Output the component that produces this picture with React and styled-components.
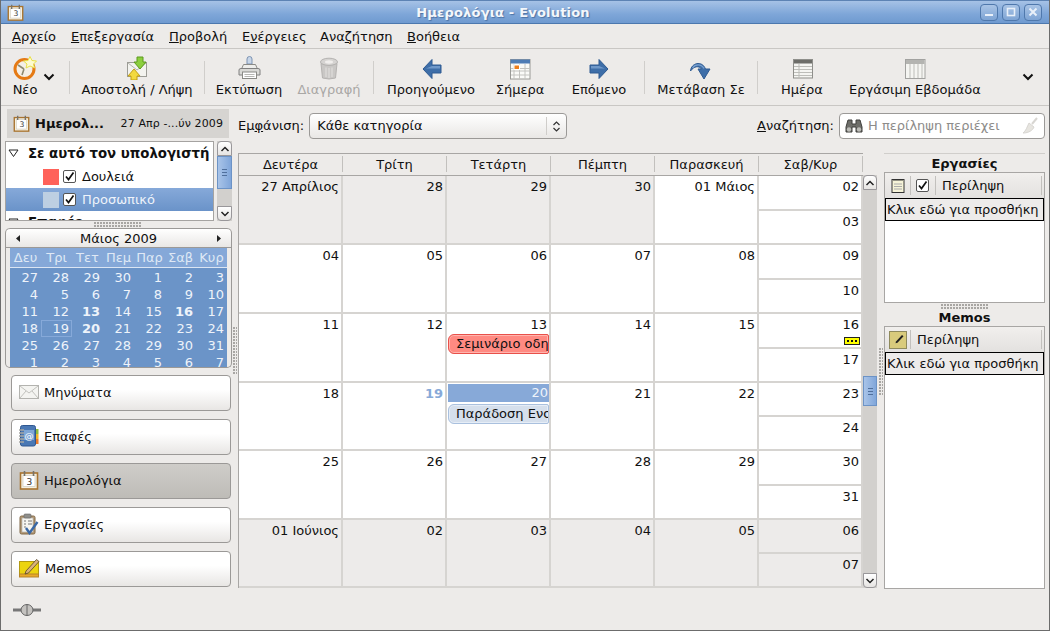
import React from "react";
import styled, { createGlobalStyle } from "styled-components";

const Global = createGlobalStyle`
  html, body { margin: 0; padding: 0; background: #edebe9; }
  body { font-family: "DejaVu Sans", sans-serif; font-size: 13px; color: #101010; }
  * { box-sizing: border-box; }
`;

const Window = styled.div`
  width: 1050px;
  height: 631px;
  display: flex;
  flex-direction: column;
  background: #edebe9;
  border-left: 1px solid #6c6c6c;
  border-right: 1px solid #6c6c6c;
  border-bottom: 1px solid #6c6c6c;
  overflow: hidden;
`;

const TitleBar = styled.div`
  height: 24px;
  flex: none;
  display: flex;
  align-items: center;
  padding: 0 7px 0 6px;
  background: linear-gradient(#a6c2e6, #7ea6d8 60%, #6f9ad0);
  border-top: 1px solid #5d83b4;
  border-bottom: 1px solid #4c78ae;
`;

const TitleText = styled.div`
  flex: 1;
  text-align: center;
  font-weight: bold;
  font-size: 13px;
  letter-spacing: 0.2px;
  color: #f4f7fb;
  text-shadow: 1px 1px 1px #4d73a5;
  padding-left: 2px;
`;

const WinButtons = styled.div`
  display: flex;
  gap: 4px;
`;

const WinButton = styled.div`
  width: 18px;
  height: 17px;
  border: 1px solid #4f78ac;
  border-radius: 4px;
  background: linear-gradient(#a9c4e6, #7ea4d4);
  display: flex;
  align-items: center;
  justify-content: center;
`;

const MenuBar = styled.div`
  height: 25px;
  flex: none;
  display: flex;
  align-items: center;
  padding-left: 11px;
  border-bottom: 1px solid #c9c7c4;
`;

const MenuItem = styled.span`
  width: ${(p) => p.$w}px;
  white-space: nowrap;
`;

const Mn = styled.span`
  text-decoration: underline;
`;

const ToolBar = styled.div`
  height: 57px;
  flex: none;
  display: flex;
  align-items: stretch;
  border-bottom: 1px solid #c9c7c4;
`;

const ToolButton = styled.div`
  width: ${(p) => p.$w}px;
  margin-left: ${(p) => p.$before || 0}px;
  margin-right: ${(p) => p.$after || 0}px;
  flex: none;
  display: flex;
  flex-direction: column;
  align-items: center;
  padding-top: 7px;
  white-space: nowrap;
  color: ${(p) => (p.$off ? "#a9a7a5" : "#101010")};
`;

const ToolIcon = styled.div`
  width: 24px;
  height: 24px;
  margin-bottom: 2px;
`;

const ToolSep = styled.div`
  width: 1px;
  flex: none;
  margin: 12px 0 11px;
  background: #d0cecb;
`;

const ToolArrow = styled.div`
  width: ${(p) => p.$w}px;
  flex: none;
  display: flex;
  justify-content: ${(p) => (p.$left ? "flex-start" : "center")};
  padding-top: 23px;
`;

const Content = styled.div`
  flex: 1;
  display: flex;
  min-height: 0;
`;

const Sidebar = styled.div`
  width: 232px;
  flex: none;
  padding: 3px 0 0 4px;
`;

const SideHeader = styled.div`
  width: 222px;
  height: 29px;
  margin-left: 2px;
  background: #d6d4d1;
  display: flex;
  align-items: center;
  padding: 0 6px;
`;

const SideTitle = styled.div`
  flex: 1;
  margin-left: 5px;
  font-weight: bold;
  font-size: 13px;
`;

const SideDate = styled.div`
  font-size: 11px;
  letter-spacing: 0.1px;
`;

const TreeRow = styled.div`
  display: flex;
  margin-top: 3px;
  gap: 3px;
`;

const Tree = styled.div`
  width: 209px;
  height: 80px;
  background: #fff;
  border: 1px solid #a5a3a1;
  overflow: hidden;
`;

const TreeItem = styled.div`
  height: 23px;
  display: flex;
  align-items: center;
  padding-left: ${(p) => p.$indent}px;
  font-weight: ${(p) => (p.$group ? "bold" : "normal")};
  font-size: ${(p) => (p.$group ? "13.3px" : "13px")};
  color: ${(p) => (p.$sel ? "#eef3fa" : "#101010")};
  background: ${(p) => (p.$sel ? "linear-gradient(#86a9d9, #6a93c9)" : "transparent")};
  white-space: nowrap;
`;

const Expander = styled.svg`
  width: 11px;
  height: 9px;
  margin-right: 9px;
  flex: none;
`;

const Swatch = styled.div`
  width: 16px;
  height: 16px;
  background: ${(p) => p.$c};
  margin-right: 4px;
`;

const Check = styled.div`
  width: 13px;
  height: 13px;
  border: 1px solid #555;
  border-radius: 2px;
  background: #fff;
  margin-right: ${(p) => p.$mr || 6}px;
  display: flex;
  align-items: center;
  justify-content: center;
`;

const ScrollBar = styled.div`
  width: ${(p) => p.$w}px;
  height: ${(p) => p.$h}px;
  flex: none;
  display: flex;
  flex-direction: column;
  background: #d2d0cd;
`;

const ScrollBtn = styled.div`
  height: ${(p) => p.$h}px;
  flex: none;
  background: linear-gradient(#fff, #e6e4e2);
  border: 1px solid #99979a;
  border-radius: ${(p) => (p.$down ? "0 0 4px 4px" : "4px 4px 0 0")};
  display: flex;
  align-items: center;
  justify-content: center;
`;

const ScrollTrack = styled.div`
  flex: 1;
  padding-top: ${(p) => p.$top}px;
`;

const ScrollThumb = styled.div`
  height: ${(p) => p.$h}px;
  background: linear-gradient(90deg, #a9c4e8, #80a6da);
  border: 1px solid #6c93c6;
  display: flex;
  flex-direction: column;
  justify-content: center;
  align-items: center;
  gap: 2px;
`;

const Grip = styled.div`
  width: 5px;
  height: 1px;
  background: #4f6f9c;
`;

const Dots = styled.div`
  width: ${(p) => p.$w}px;
  height: ${(p) => p.$h}px;
  flex: none;
  background-image: radial-gradient(circle at 1px 1px, #a8a6a3 0.8px, transparent 1px);
  background-size: 3px 3px;
`;

const HandleH = styled.div`
  height: 7px;
  display: flex;
  justify-content: center;
  align-items: center;
  padding-right: 2px;
`;

const MiniCal = styled.div`
  width: 227px;
  height: 140px;
  border: 1px solid #9b9997;
  border-top: none;
  border-radius: 5px;
  display: flex;
  flex-direction: column;
  align-items: center;
  overflow: hidden;
`;

const MiniHead = styled.div`
  width: 227px;
  height: 20px;
  flex: none;
  border: 1px solid #9b9997;
  border-radius: 5px 5px 0 0;
  background: linear-gradient(#fff, #e9e7e5);
  display: flex;
  align-items: center;
  justify-content: space-between;
  padding: 0 10px;
`;

const MiniBody = styled.div`
  width: 217px;
  flex: 1;
  background: #6b94c8;
`;

const MiniDays = styled.div`
  display: grid;
  grid-template-columns: repeat(7, 31px);
  height: 20px;
  background: #85a8d8;
  align-items: center;
  text-align: center;
  font-size: 13px;
  color: #dfe8f5;
  border-bottom: 1px solid #dbe5f3;
  white-space: nowrap;
`;

const MiniGrid = styled.div`
  display: grid;
  grid-template-columns: repeat(7, 31px);
  grid-auto-rows: 17px;
  margin-top: 1px;
`;

const MiniCell = styled.div`
  text-align: right;
  padding-right: 2px;
  line-height: 16px;
  color: #eef3fa;
  font-weight: ${(p) => (p.$bold ? "bold" : "normal")};
  border: 1px solid ${(p) => (p.$today ? "#86a9d9" : "transparent")};
`;

const SwitchList = styled.div`
  margin: 7px 0 0 6px;
  display: flex;
  flex-direction: column;
  gap: 8px;
`;

const SwitchBtn = styled.div`
  width: 220px;
  height: 36px;
  border: 1px solid #9b9997;
  border-radius: 4px;
  display: flex;
  align-items: center;
  padding: 0 0 2px 7px;
  gap: 5px;
  background: ${(p) =>
    p.$on ? "linear-gradient(#cfcdc9, #bebcb7)" : "linear-gradient(#fff 40%, #e8e6e4)"};
`;

const SideHandle = styled.div`
  width: 5px;
  flex: none;
  padding-top: 221px;
`;

const Main = styled.div`
  flex: 1;
  min-width: 0;
  display: flex;
  flex-direction: column;
`;

const FilterBar = styled.div`
  height: 47px;
  flex: none;
  display: flex;
  align-items: center;
  padding: 0 4px 7px 0;
`;

const FilterLabel = styled.div`
  margin-right: 5px;
  padding-bottom: 2px;
  white-space: nowrap;
`;

const Combo = styled.div`
  width: 258px;
  height: 26px;
  border: 1px solid #9b9997;
  border-radius: 4px;
  background: linear-gradient(#fff, #e9e7e5);
  display: flex;
  align-items: center;
  padding-left: 7px;
`;

const ComboText = styled.div`
  flex: 1;
  padding-bottom: 2px;
`;

const ComboArrow = styled.div`
  width: 20px;
  height: 18px;
  border-left: 1px solid #cfcdca;
  display: flex;
  align-items: center;
  justify-content: center;
`;

const Spacer = styled.div`
  flex: 1;
`;

const SearchBox = styled.div`
  width: 206px;
  height: 26px;
  border: 1px solid #9b9997;
  border-radius: 4px;
  background: #fff;
  display: flex;
  align-items: center;
  padding: 0 5px;
  color: #8d8b89;
`;

const SearchText = styled.div`
  flex: 1;
  margin-left: 5px;
  padding-bottom: 2px;
  white-space: nowrap;
`;

const Panes = styled.div`
  flex: 1;
  display: flex;
  min-height: 0;
`;

const CalWrap = styled.div`
  width: 625px;
  flex: none;
  display: flex;
  flex-direction: column;
  border: 1px solid #a8a6a4;
  border-right: none;
  border-bottom: none;
  height: 435px;
`;

const CalHead = styled.div`
  display: grid;
  grid-template-columns: repeat(6, 104px);
  height: 22px;
  flex: none;
  background: #edebe9;
  border-bottom: 1px solid #a8a6a4;
`;

const CalHeadCell = styled.div`
  display: flex;
  align-items: center;
  justify-content: center;
  border-right: 1px solid #c2c0bd;
  margin: 2px 0 3px;
`;

const CalGrid = styled.div`
  display: grid;
  grid-template-columns: repeat(6, 104px);
  grid-template-rows: 69px 69px 69px 68px 69px 68px;
`;

const DayCell = styled.div`
  background: ${(p) => (p.$dim ? "#edebea" : "#fff")};
  border-right: 2px solid #d6d4d1;
  border-bottom: 2px solid #d6d4d1;
  display: flex;
  flex-direction: column;
  overflow: hidden;
`;

const DayNum = styled.div`
  text-align: right;
  padding: 3px 2px 0 0;
  height: 19px;
  line-height: 16px;
  white-space: nowrap;
  color: ${(p) => (p.$blue ? "#87a9d8" : "#101010")};
  font-weight: ${(p) => (p.$blue ? "bold" : "normal")};
`;

const TodayNum = styled.div`
  margin: 1px 0 0 1px;
  height: 18px;
  line-height: 17px;
  text-align: right;
  padding-right: 1px;
  background: #87a9d8;
  color: #eef3fa;
`;

const Event = styled.div`
  height: 20px;
  margin: ${(p) => (p.$gap ? 2 : 1)}px 0 0 1px;
  border: 1px solid ${(p) => (p.$red ? "#e8504a" : "#a9c0de")};
  border-radius: 6px 2px 2px 6px;
  background: ${(p) => (p.$red ? "#ff8a82" : "#d5dfec")};
  box-shadow: inset 0 0 0 1px ${(p) => (p.$red ? "#ffb5ae" : "#e6edf6")};
  padding-left: 7px;
  line-height: 18px;
  white-space: nowrap;
  overflow: hidden;
`;

const SplitCell = styled.div`
  display: flex;
  flex-direction: column;
`;

const HalfDay = styled.div`
  flex: 1 1 0;
  min-height: 0;
  background: ${(p) => (p.$dim ? "#edebea" : "#fff")};
  border-right: 2px solid #d6d4d1;
  border-bottom: 2px solid #d6d4d1;
  display: flex;
  flex-direction: column;
`;

const MoreBadge = styled.div`
  align-self: flex-end;
  margin: 4px 1px 0 0;
  width: 16px;
  height: 8px;
  background: #ffff00;
  border: 1px solid #222;
  display: flex;
  align-items: center;
  justify-content: center;
  gap: 2px;
`;

const MoreDot = styled.div`
  width: 2px;
  height: 2px;
  background: #111;
`;

const CalScroll = styled.div`
  margin-top: 22px;
`;

const PaneHandle = styled.div`
  width: 7px;
  flex: none;
  padding: 195px 0 0 2px;
`;

const TaskPane = styled.div`
  width: 161px;
  flex: none;
  display: flex;
  flex-direction: column;
  border-top: 1px solid #d0cecb;
`;

const PaneTitle = styled.div`
  height: ${(p) => p.$h}px;
  flex: none;
  font-weight: bold;
  text-align: center;
  line-height: ${(p) => p.$lh}px;
`;

const ListBox = styled.div`
  height: ${(p) => p.$h}px;
  flex: none;
  background: #fff;
  border: 1px solid #a8a6a4;
`;

const ListHead = styled.div`
  height: 25px;
  display: flex;
  align-items: center;
  background: linear-gradient(#f1efed, #e3e1df);
`;

const ListHeadIcon = styled.div`
  width: ${(p) => p.$w}px;
  height: 19px;
  flex: none;
  display: flex;
  align-items: center;
  justify-content: center;
  border-right: 1px solid #c2c0bd;
`;

const ListHeadText = styled.div`
  flex: 1;
  height: 19px;
  line-height: 19px;
  padding-left: 6px;
  border-right: 1px solid #c2c0bd;
  margin-right: 2px;
`;

const AddRow = styled.div`
  height: 23px;
  border: 1px solid #000;
  background: #edebea;
  line-height: 21px;
  padding-left: 1px;
  white-space: nowrap;
  overflow: hidden;
`;

const PaneSplit = styled.div`
  height: 6px;
  flex: none;
  display: flex;
  justify-content: center;
  align-items: center;
`;

const StatusBar = styled.div`
  height: 40px;
  flex: none;
  padding: 13px 0 0 12px;
`;

const Chevron = () => (
  <svg width="12" height="10" viewBox="0 0 12 10">
    <path d="M1.5 2.5 L6 7 L10.5 2.5" fill="none" stroke="#111" strokeWidth="2" />
  </svg>
);

const TinyArrow = ({ up }) => (
  <svg width="10" height="8" viewBox="0 0 10 8">
    <path d={up ? "M1.5 6 L5 2.5 L8.5 6" : "M1.5 2 L5 5.5 L8.5 2"} fill="none" stroke="#222" strokeWidth="1.5" />
  </svg>
);

const Tri = ({ left }) => (
  <svg width="4" height="7" viewBox="0 0 4 7">
    <path d={left ? "M4 0 V7 L0 3.5Z" : "M0 0 V7 L4 3.5Z"} fill="#222" />
  </svg>
);

const TickMark = () => (
  <svg width="11" height="11" viewBox="0 0 11 11">
    <path d="M2 5.5 L4.5 8.5 L9.5 1.5" fill="none" stroke="#111" strokeWidth="1.7" />
  </svg>
);

const NewIcon = () => (
  <svg width="24" height="24" viewBox="0 0 24 24">
    <circle cx="11.5" cy="13" r="9.5" fill="#f4efe6" stroke="#e57a14" strokeWidth="3" />
    <path d="M11 13 L5 9 M11 13 L9 19" stroke="#8d8a70" strokeWidth="1.6" />
    <path d="M17 0.5 L19 4.5 L23.5 5 L20.5 8 L21.5 12 L17 10 L13 12 L14 8 L10.5 5 L15 4.5Z" fill="#fdfbd0" stroke="#e8e04a" strokeWidth="1" />
  </svg>
);

const SendIcon = () => (
  <svg width="24" height="24" viewBox="0 0 24 24">
    <rect x="2.5" y="6.5" width="19" height="14" fill="#f3f3ef" stroke="#9c9c96" />
    <path d="M3 7 L12 14 L21 7" fill="none" stroke="#b5b5ae" />
    <path d="M12 1 H18 V6 H21 L15 13 L9 6 H12Z" fill="#8ccf3e" stroke="#5d9a1f" />
    <path d="M9 13 L15 20 H12 V24 H6 V20 H3Z" fill="#f3d93f" stroke="#c49f12" />
  </svg>
);

const PrintIcon = () => (
  <svg width="24" height="24" viewBox="0 0 24 24">
    <path d="M10 8 V3 a2.5 2.5 0 0 1 5 0 V8Z" fill="#c8d6e8" stroke="#7d93b2" />
    <path d="M6.5 8.5 H18.5 L20.5 13 H4.5Z" fill="#eeeeec" stroke="#8a8a86" />
    <path d="M2 14 Q2 12.5 4 12.5 H21 Q23 12.5 23 14 V19 H2Z" fill="#d9d9d6" stroke="#808080" />
    <rect x="5.5" y="16" width="14" height="6.5" fill="#fff" stroke="#8a8a86" />
    <path d="M7.5 18.5 H17.5 M7.5 20.5 H17.5" stroke="#b7b7b4" />
  </svg>
);

const TrashIcon = () => (
  <svg width="24" height="24" viewBox="0 0 24 24">
    <ellipse cx="12" cy="6" rx="8.5" ry="3.8" fill="#d5d3d1" stroke="#b5b3b1" />
    <path d="M4 7.5 L5.5 22 Q12 24 18.5 22 L20 7.5 Q12 11.5 4 7.5Z" fill="#c9c7c5" stroke="#b5b3b1" />
    <path d="M9 11.5 V21 M12 12 V22 M15 11.5 V21" stroke="#e3e1df" />
    <ellipse cx="12" cy="6" rx="4" ry="1.7" fill="#f0eeec" />
  </svg>
);

const ArrowIcon = ({ right }) => (
  <svg width="24" height="24" viewBox="0 0 24 24">
    <g transform={right ? "translate(25 0) scale(-1 1)" : undefined}>
      <path d="M4 13 L13 3.5 V9 H22 V17 H13 V22.5Z" fill="#3e6ea8" stroke="#2f5b92" />
      <path d="M13 10 H21 V12.5 H7 Z" fill="#6f98c9" />
    </g>
  </svg>
);

const TodayIcon = () => (
  <svg width="24" height="24" viewBox="0 0 24 24">
    <rect x="2.5" y="3.5" width="19.5" height="19.5" fill="#fbfbf8" stroke="#9a9a96" />
    <rect x="2.5" y="3.5" width="19.5" height="4" fill="#4f7db5" />
    <path d="M6 8 V23 M11.5 8 V23 M17 8 V23 M3 12.5 H22 M3 15 H22 M3 19 H22" stroke="#c4c4c0" />
    <rect x="6" y="9" width="5.5" height="4.5" fill="#ee7f1d" stroke="#fff" />
  </svg>
);

const GotoIcon = () => (
  <svg width="24" height="24" viewBox="0 0 24 24">
    <path d="M1.5 15 C2 7 13 4 16.5 13 H21 L15 23 L9 13 H12.5 C10 9.5 5 10 1.5 15Z" fill="#3e6ea8" stroke="#2f5b92" />
    <path d="M3.5 12 C6 8 12 7.5 15 12.5" fill="none" stroke="#7ba2d1" strokeWidth="1.3" />
  </svg>
);

const DayIcon = () => (
  <svg width="24" height="24" viewBox="0 0 24 24">
    <rect x="3.5" y="3.5" width="19" height="18.5" fill="#f5f5f2" stroke="#8f8f8b" />
    <rect x="4" y="4" width="18" height="3.5" fill="#6d6d69" />
    <path d="M9 8 V22 M4 10.5 H22 M4 13.5 H22 M4 16.5 H22 M4 19.5 H22" stroke="#bdbdb9" />
  </svg>
);

const WeekIcon = () => (
  <svg width="24" height="24" viewBox="0 0 24 24">
    <rect x="2.5" y="3.5" width="19.5" height="19" fill="#f5f5f2" stroke="#a2a2a0" />
    <rect x="3" y="4" width="18.5" height="4" fill="#b4b4b1" />
    <path d="M7 8 V22 M11 8 V22 M15 8 V22 M19 8 V22" stroke="#bdbdb9" />
  </svg>
);

const CalIcon = ({ size = 18 }) => (
  <svg width={size} height={size} viewBox="0 0 20 20">
    <rect x="1.5" y="3" width="17" height="16" fill="#f4efe0" stroke="#a9742f" strokeWidth="1.6" />
    <rect x="4" y="5.5" width="12" height="11" fill="#fff" stroke="#c9c3b3" strokeWidth="0.6" />
    <path d="M5.5 1 V6 M14.5 1 V6" stroke="#77736a" strokeWidth="1.6" />
    <text x="7.5" y="14.5" fontSize="9" fontFamily="DejaVu Sans" fill="#333">3</text>
  </svg>
);

const MailIcon = () => (
  <svg width="20" height="18" viewBox="0 0 20 18">
    <rect x="0.5" y="2.5" width="19" height="13" fill="#f4f4f1" stroke="#b3b3af" />
    <path d="M1 3 L10 10 L19 3 M1 15 L7 8 M19 15 L13 8" fill="none" stroke="#c2c2be" />
  </svg>
);

const ContactsIcon = () => (
  <svg width="20" height="22" viewBox="0 0 20 22">
    <rect x="15.5" y="4" width="4" height="5" fill="#8cbb3e" />
    <rect x="15.5" y="9" width="4" height="5" fill="#f0b429" />
    <rect x="15.5" y="14" width="4" height="5" fill="#e8792b" />
    <rect x="1.5" y="0.5" width="15" height="20.5" rx="2" fill="#4a78b4" stroke="#2f5790" />
    <rect x="5" y="5" width="10" height="10" fill="#7ea6d6" />
    <text x="5.4" y="13.5" fontSize="9" fontFamily="DejaVu Sans" fill="#fff">@</text>
    <path d="M0 5 H5 M0 8 H5 M0 11 H5 M0 14 H5 M0 17 H5" stroke="#a6a6a2" strokeWidth="1.5" />
  </svg>
);

const TasksIcon = () => (
  <svg width="20" height="22" viewBox="0 0 20 22">
    <rect x="1" y="3" width="15" height="18" rx="1.5" fill="#b59a74" stroke="#7f6747" />
    <rect x="3" y="5" width="11" height="14" fill="#f6f5f0" stroke="#aaa" strokeWidth="0.6" />
    <rect x="5" y="1" width="7" height="4" rx="1" fill="#8f8f8b" stroke="#666" strokeWidth="0.6" />
    <path d="M5 8 H7 M9 8 H13 M5 11 H7 M9 11 H13 M5 14 H7" stroke="#777" />
    <path d="M7 15 L10.5 20 L18.5 9" fill="none" stroke="#3968a6" strokeWidth="2.4" />
  </svg>
);

const MemoIcon = () => (
  <svg width="21" height="20" viewBox="0 0 21 20">
    <rect x="0.5" y="3.5" width="19" height="15" fill="#ecd40f" stroke="#b39a12" />
    <rect x="0.5" y="16" width="19" height="3" fill="#e9a92b" stroke="#b5832a" />
    <path d="M7 13 L17.5 1.5 L20 3.5 L9.5 15 L6 16Z" fill="#d9b27a" stroke="#55422a" strokeWidth="0.8" />
  </svg>
);

const Binoculars = () => (
  <svg width="18" height="16" viewBox="0 0 18 16">
    <path d="M1 9 L3 2 H7 V6 H11 V2 H15 L17 9 V14 H11 V9 H7 V14 H1Z" fill="#6d6d69" stroke="#3f3f3c" />
    <circle cx="4" cy="11.5" r="2.2" fill="#bdbdb8" />
    <circle cx="14" cy="11.5" r="2.2" fill="#bdbdb8" />
  </svg>
);

const Broom = () => (
  <svg width="18" height="18" viewBox="0 0 18 18">
    <path d="M16 1 L11 7" stroke="#d8d6d2" strokeWidth="2" />
    <path d="M8 6 L13 10 C12 13 8 16 2 16 C5 14 6 10 8 6Z" fill="#e7e5e0" stroke="#d8d6d2" />
  </svg>
);

const NoteHead = () => (
  <svg width="14" height="15" viewBox="0 0 14 15">
    <rect x="1" y="1.5" width="12" height="13" fill="#f6f3d8" stroke="#333" />
    <path d="M3 1 V3 M5 1 V3 M7 1 V3 M9 1 V3 M11 1 V3" stroke="#333" />
    <path d="M3 6 H11 M3 8.5 H11 M3 11 H11" stroke="#aaa" />
  </svg>
);

const MemoHead = () => (
  <svg width="18" height="18" viewBox="0 0 18 18">
    <rect x="0.5" y="0.5" width="17" height="17" fill="#d9cb7c" stroke="#8f8a5c" />
    <path d="M7 10.5 L13 4 L14.5 5.2 L8.5 11.7 L6.5 12.2Z" fill="#222" />
  </svg>
);

const Plug = () => (
  <svg width="28" height="14" viewBox="0 0 28 14">
    <path d="M0 7 H28" stroke="#777" strokeWidth="3" />
    <ellipse cx="14" cy="7" rx="6" ry="5.5" fill="#c4c2bf" stroke="#666" />
    <path d="M14 1.5 V12.5" stroke="#666" />
  </svg>
);

const TreeExpander = () => (
  <Expander viewBox="0 0 11 9">
    <path d="M1 1 H10 L5.5 7.5Z" fill="#fff" stroke="#222" />
  </Expander>
);

const miniDays = ["Δευ", "Τρι", "Τετ", "Πεμ", "Παρ", "Σαβ", "Κυρ"];
const miniDates = [27, 28, 29, 30, 1, 2, 3, 4, 5, 6, 7, 8, 9, 10, 11, 12, 13, 14, 15, 16, 17, 18, 19, 20, 21, 22, 23, 24, 25, 26, 27, 28, 29, 30, 31, 1, 2, 3, 4, 5, 6, 7];

const switchers = [
  { label: "Μηνύματα", icon: <MailIcon /> },
  { label: "Επαφές", icon: <ContactsIcon /> },
  { label: "Ημερολόγια", icon: <CalIcon size={20} />, on: true },
  { label: "Εργασίες", icon: <TasksIcon /> },
  { label: "Memos", icon: <MemoIcon /> },
];

const weekHead = ["Δευτέρα", "Τρίτη", "Τετάρτη", "Πέμπτη", "Παρασκευή", "Σαβ/Κυρ"];

const weeks = [
  { days: [["27 Απρίλιος", 1], ["28", 1], ["29", 1], ["30", 1], ["01 Μάιος"]], end: ["02", "03"] },
  { days: [["04"], ["05"], ["06"], ["07"], ["08"]], end: ["09", "10"] },
  { days: [["11"], ["12"], ["13"], ["14"], ["15"]], end: ["16", "17"], badge: true },
  { days: [["18"], ["19"], ["20"], ["21"], ["22"]], end: ["23", "24"] },
  { days: [["25"], ["26"], ["27"], ["28"], ["29"]], end: ["30", "31"] },
  { days: [["01 Ιούνιος", 1], ["02", 1], ["03", 1], ["04", 1], ["05", 1]], end: ["06", "07"], dim: true },
];

function renderDay(week, d, i) {
  const [text, dim] = d;
  if (week === 3 && i === 2) {
    return (
      <DayCell key={i}>
        <TodayNum>{text}</TodayNum>
        <Event $gap>Παράδοση Ενσωμάτωσης</Event>
      </DayCell>
    );
  }
  return (
    <DayCell key={i} $dim={dim}>
      <DayNum $blue={week === 3 && i === 1}>{text}</DayNum>
      {week === 2 && i === 2 && <Event $red>Σεμινάριο οδηγών</Event>}
    </DayCell>
  );
}

function App() {
  return (
    <Window>
      <Global />
      <TitleBar>
        <CalIcon size={17} />
        <TitleText>Ημερολόγια - Evolution</TitleText>
        <WinButtons>
          <WinButton>
            <svg width="10" height="10" viewBox="0 0 10 10"><path d="M1 8 H9" stroke="#e9f0f9" strokeWidth="2" /></svg>
          </WinButton>
          <WinButton>
            <svg width="10" height="10" viewBox="0 0 10 10"><rect x="1.5" y="1.5" width="7" height="7" fill="none" stroke="#e9f0f9" strokeWidth="1.6" /></svg>
          </WinButton>
          <WinButton>
            <svg width="10" height="10" viewBox="0 0 10 10"><path d="M1.5 1.5 L8.5 8.5 M8.5 1.5 L1.5 8.5" stroke="#e9f0f9" strokeWidth="2" /></svg>
          </WinButton>
        </WinButtons>
      </TitleBar>

      <MenuBar>
        <MenuItem $w={59}><Mn>Α</Mn>ρχείο</MenuItem>
        <MenuItem $w={98}><Mn>Ε</Mn>πεξεργασία</MenuItem>
        <MenuItem $w={73}><Mn>Π</Mn>ροβολή</MenuItem>
        <MenuItem $w={78}>Ε<Mn>ν</Mn>έργειες</MenuItem>
        <MenuItem $w={87}>Ανα<Mn>ζ</Mn>ήτηση</MenuItem>
        <MenuItem $w={60}><Mn>Β</Mn>οήθεια</MenuItem>
      </MenuBar>

      <ToolBar>
        <ToolButton $w={36} $before={6}><ToolIcon><NewIcon /></ToolIcon>Νέο</ToolButton>
        <ToolArrow $w={26} $left><Chevron /></ToolArrow>
        <ToolSep />
        <ToolButton $w={134}><ToolIcon><SendIcon /></ToolIcon>Αποστολή / Λήψη</ToolButton>
        <ToolSep />
        <ToolButton $w={88}><ToolIcon><PrintIcon /></ToolIcon>Εκτύπωση</ToolButton>
        <ToolButton $w={72} $after={8} $off><ToolIcon><TrashIcon /></ToolIcon>Διαγραφή</ToolButton>
        <ToolSep />
        <ToolButton $w={114}><ToolIcon><ArrowIcon /></ToolIcon>Προηγούμενο</ToolButton>
        <ToolButton $w={64} $after={2}><ToolIcon><TodayIcon /></ToolIcon>Σήμερα</ToolButton>
        <ToolButton $w={90}><ToolIcon><ArrowIcon right /></ToolIcon>Επόμενο</ToolButton>
        <ToolSep />
        <ToolButton $w={112}><ToolIcon><GotoIcon /></ToolIcon>Μετάβαση Σε</ToolButton>
        <ToolSep />
        <ToolButton $w={88}><ToolIcon><DayIcon /></ToolIcon>Ημέρα</ToolButton>
        <ToolButton $w={138}><ToolIcon><WeekIcon /></ToolIcon>Εργάσιμη Εβδομάδα</ToolButton>
        <ToolArrow $w={88}><Chevron /></ToolArrow>
      </ToolBar>

      <Content>
        <Sidebar>
          <SideHeader>
            <CalIcon size={17} />
            <SideTitle>Ημερολ...</SideTitle>
            <SideDate>27 Απρ -...ύν 2009</SideDate>
          </SideHeader>

          <TreeRow>
            <Tree>
              <TreeItem $group $indent={2}>
                <TreeExpander />
                Σε αυτό τον υπολογιστή
              </TreeItem>
              <TreeItem $indent={37}>
                <Swatch $c="#ff625a" />
                <Check><TickMark /></Check>Δουλειά
              </TreeItem>
              <TreeItem $indent={37} $sel>
                <Swatch $c="#bdcfe2" />
                <Check><TickMark /></Check>Προσωπικό
              </TreeItem>
              <TreeItem $group $indent={2}>
                <TreeExpander />
                Επαφές
              </TreeItem>
            </Tree>
            <ScrollBar $w={15} $h={80}>
              <ScrollBtn $h={15}><TinyArrow up /></ScrollBtn>
              <ScrollTrack $top={0}>
                <ScrollThumb $h={33}><Grip /><Grip /><Grip /></ScrollThumb>
              </ScrollTrack>
              <ScrollBtn $h={15} $down><TinyArrow /></ScrollBtn>
            </ScrollBar>
          </TreeRow>

          <HandleH><Dots $w={48} $h={5} /></HandleH>

          <MiniCal>
            <MiniHead>
              <Tri left />
              <span>Μάιος 2009</span>
              <Tri />
            </MiniHead>
            <MiniBody>
              <MiniDays>
                {miniDays.map((d) => <div key={d}>{d}</div>)}
              </MiniDays>
              <MiniGrid>
                {miniDates.map((d, i) => (
                  <MiniCell key={i} $today={i === 22} $bold={i === 16 || i === 19 || i === 23}>{d}</MiniCell>
                ))}
              </MiniGrid>
            </MiniBody>
          </MiniCal>

          <SwitchList>
            {switchers.map((s) => (
              <SwitchBtn key={s.label} $on={s.on}>
                {s.icon}
                {s.label}
              </SwitchBtn>
            ))}
          </SwitchList>
        </Sidebar>

        <SideHandle><Dots $w={4} $h={48} /></SideHandle>

        <Main>
          <FilterBar>
            <FilterLabel>Εμ<Mn>φ</Mn>άνιση:</FilterLabel>
            <Combo>
              <ComboText>Κάθε κατηγορία</ComboText>
              <ComboArrow>
                <svg width="9" height="13" viewBox="0 0 9 13">
                  <path d="M1.5 5 L4.5 2 L7.5 5 M1.5 8 L4.5 11 L7.5 8" fill="none" stroke="#333" strokeWidth="1.2" />
                </svg>
              </ComboArrow>
            </Combo>
            <Spacer />
            <FilterLabel><Mn>Α</Mn>ναζήτηση:</FilterLabel>
            <SearchBox>
              <Binoculars />
              <SearchText>Η περίληψη περιέχει</SearchText>
              <Broom />
            </SearchBox>
          </FilterBar>

          <Panes>
            <CalWrap>
              <CalHead>
                {weekHead.map((h) => <CalHeadCell key={h}>{h}</CalHeadCell>)}
              </CalHead>
              <CalGrid>
                {weeks.map((w, wi) => (
                  <React.Fragment key={wi}>
                    {w.days.map((d, i) => renderDay(wi, d, i))}
                    <SplitCell>
                      <HalfDay $dim={w.dim}>
                        <DayNum>{w.end[0]}</DayNum>
                        {w.badge && (
                          <MoreBadge><MoreDot /><MoreDot /><MoreDot /></MoreBadge>
                        )}
                      </HalfDay>
                      <HalfDay $dim={w.dim}>
                        <DayNum>{w.end[1]}</DayNum>
                      </HalfDay>
                    </SplitCell>
                  </React.Fragment>
                ))}
              </CalGrid>
            </CalWrap>

            <CalScroll>
              <ScrollBar $w={14} $h={413}>
                <ScrollBtn $h={15}><TinyArrow up /></ScrollBtn>
                <ScrollTrack $top={186}>
                  <ScrollThumb $h={30}><Grip /><Grip /><Grip /></ScrollThumb>
                </ScrollTrack>
                <ScrollBtn $h={15} $down><TinyArrow /></ScrollBtn>
              </ScrollBar>
            </CalScroll>

            <PaneHandle><Dots $w={4} $h={48} /></PaneHandle>

            <TaskPane>
              <PaneTitle $h={18} $lh={20}>Εργασίες</PaneTitle>
              <ListBox $h={131}>
                <ListHead>
                  <ListHeadIcon $w={26}><NoteHead /></ListHeadIcon>
                  <ListHeadIcon $w={25}>
                    <Check $mr={1}><TickMark /></Check>
                  </ListHeadIcon>
                  <ListHeadText>Περίληψη</ListHeadText>
                </ListHead>
                <AddRow>Κλικ εδώ για προσθήκη</AddRow>
              </ListBox>
              <PaneSplit><Dots $w={48} $h={5} /></PaneSplit>
              <PaneTitle $h={17} $lh={17}>Memos</PaneTitle>
              <ListBox $h={263}>
                <ListHead>
                  <ListHeadIcon $w={26}><MemoHead /></ListHeadIcon>
                  <ListHeadText>Περίληψη</ListHeadText>
                </ListHead>
                <AddRow>Κλικ εδώ για προσθήκη</AddRow>
              </ListBox>
            </TaskPane>
          </Panes>
        </Main>
      </Content>

      <StatusBar><Plug /></StatusBar>
    </Window>
  );
}

export default App;
